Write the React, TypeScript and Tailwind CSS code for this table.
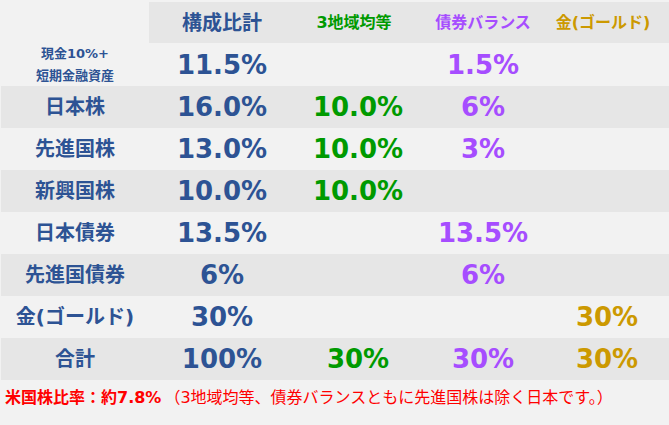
import React from "react";

const F = { fontFamily: '"DejaVu Sans", "Noto Sans CJK JP", sans-serif' };

type Cell = { t: string; c: string } | null;
const BLUE = "text-[#2d5394]";
const GREEN = "text-[#009a00]";
const PURPLE = "text-[#a64dff]";
const GOLD = "text-[#cc9900]";

const rows: { label: React.ReactNode; cells: Cell[]; gray: boolean; h: string }[] = [
  {
    label: (
      <div className="flex flex-col items-center text-[13px] leading-[22px] font-bold text-[#2d5394]">
        <span>現金10%+</span>
        <span>短期金融資産</span>
      </div>
    ),
    cells: [{ t: "11.5%", c: BLUE }, null, { t: "1.5%", c: PURPLE }, null],
    gray: false,
    h: "h-[43px]",
  },
  { label: "日本株", cells: [{ t: "16.0%", c: BLUE }, { t: "10.0%", c: GREEN }, { t: "6%", c: PURPLE }, null], gray: true, h: "h-[42px]" },
  { label: "先進国株", cells: [{ t: "13.0%", c: BLUE }, { t: "10.0%", c: GREEN }, { t: "3%", c: PURPLE }, null], gray: false, h: "h-[42px]" },
  { label: "新興国株", cells: [{ t: "10.0%", c: BLUE }, { t: "10.0%", c: GREEN }, null, null], gray: true, h: "h-[42px]" },
  { label: "日本債券", cells: [{ t: "13.5%", c: BLUE }, null, { t: "13.5%", c: PURPLE }, null], gray: false, h: "h-[42px]" },
  { label: "先進国債券", cells: [{ t: "6%", c: BLUE }, null, { t: "6%", c: PURPLE }, null], gray: true, h: "h-[42px]" },
  { label: "金(ゴールド)", cells: [{ t: "30%", c: BLUE }, null, null, { t: "30%", c: GOLD }], gray: false, h: "h-[42px]" },
  { label: "合計", cells: [{ t: "100%", c: BLUE }, { t: "30%", c: GREEN }, { t: "30%", c: PURPLE }, { t: "30%", c: GOLD }], gray: true, h: "h-[42px]" },
];

const cols = "grid grid-cols-[148px_146px_126px_124px_1fr]";

export default function App() {
  return (
    <div className="w-[669px] h-[425px] bg-[#f2f2f2] overflow-hidden" style={F}>
      <div className="pt-[2px] pl-[1px]">
        <div className={`${cols} h-[41px] items-center`}>
          <div />
          <div className="h-full bg-[#e6e6e6] flex items-center justify-center text-[20px] font-bold text-[#2d5394]">構成比計</div>
          <div className="h-full bg-[#e6e6e6] flex items-center justify-center text-[16px] font-bold text-[#009a00] pr-[8px]">3地域均等</div>
          <div className="h-full bg-[#e6e6e6] flex items-center justify-center text-[16px] font-bold text-[#a64dff]">債券バランス</div>
          <div className="h-full bg-[#e6e6e6] flex items-center justify-center text-[16px] font-bold text-[#cc9900] pr-[8px]">金(ゴールド)</div>
        </div>
        {rows.map((r, i) => (
          <div key={i} className={`${cols} ${r.h} items-center ${r.gray ? "bg-[#e6e6e6]" : ""}`}>
            <div className="flex justify-center text-[20px] font-bold text-[#2d5394]">{r.label}</div>
            {r.cells.map((c, j) => (
              <div key={j} className={`flex justify-center text-[26px] font-bold ${c ? c.c : ""}`}>
                {c ? c.t : ""}
              </div>
            ))}
          </div>
        ))}
      </div>
      <div className="pl-[5px] pt-[8px] text-[16px] text-[#ff0000] leading-[20px]">
        <span className="font-bold">米国株比率：約7.8%</span>
        <span className="ml-[3px]">（3地域均等、債券バランスともに先進国株は除く日本です。）</span>
      </div>
    </div>
  );
}
